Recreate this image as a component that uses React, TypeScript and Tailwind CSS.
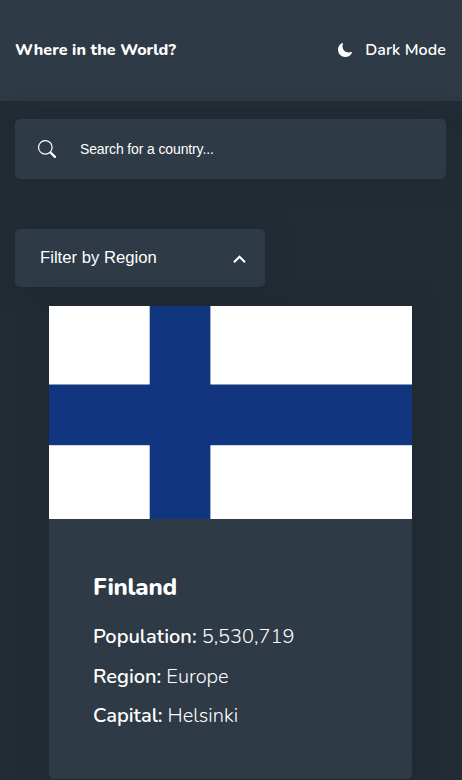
import { IoMoon } from "react-icons/io5";
import { BsSearch } from "react-icons/bs";
import { MdKeyboardArrowUp } from "react-icons/md";

const details = [
  { label: "Population", value: "5,530,719" },
  { label: "Region", value: "Europe" },
  { label: "Capital", value: "Helsinki" },
];

function Flag() {
  return (
    <svg viewBox="0 0 363 213" className="block h-[213px] w-full" role="img" aria-label="Flag of Finland">
      <rect width="363" height="213" fill="#fff" />
      <rect x="100.7" width="60.7" height="213" fill="#11357f" />
      <rect y="78.5" width="363" height="60.7" fill="#11357f" />
    </svg>
  );
}

export default function App() {
  return (
    <div className="h-[780px] w-full overflow-hidden bg-[#222c35] font-['Nunito','Open_Sans',sans-serif] text-white">
      <header className="flex h-[101px] items-center justify-between bg-[#2e3a45] pr-4 pb-0.5 pl-[15px] shadow-[0_0_20px_rgba(43,50,50,0.6)]">
        <h1 className="text-base font-extrabold tracking-[0.06px]">Where in the World?</h1>
        <button className="flex items-center gap-3 text-base font-semibold tracking-[0.1px]">
          <IoMoon size={16} />
          Dark Mode
        </button>
      </header>
      <main className="pt-[18px] pr-4 pl-[15px]">
        <label className="flex h-[60px] items-center rounded-[5px] bg-[#2e3a45] pl-[23px] shadow-[0_0_25px_rgba(32,40,46,0.6)]">
          <BsSearch size={18} />
          <input
            className="ml-6 w-72 bg-transparent font-['Liberation_Sans',sans-serif] text-[14px] tracking-[-0.13px] outline-none placeholder:text-white"
            placeholder="Search for a country..."
          />
        </label>
        <button className="mt-[50px] flex h-[58px] w-[250px] items-center justify-between rounded-[5px] bg-[#2e3a45] pr-[13px] pl-[25px] font-['Liberation_Sans',sans-serif] text-[16.7px] shadow-[0_0_25px_rgba(32,40,46,0.6)]">
          <span className="pb-px">Filter by Region</span>
          <MdKeyboardArrowUp size={25} className="mt-0.5" />
        </button>
        <article className="mt-[19px] ml-[34px] h-[473px] w-[363px] overflow-hidden rounded-b-[5px] bg-[#2e3a45] shadow-[0_0_25px_rgba(32,40,46,0.6)]">
          <Flag />
          <div className="px-11 pt-[50px]">
            <h2 className="text-2xl leading-9 font-extrabold tracking-[-0.25px]">Finland</h2>
            <dl className="mt-[17px] flex flex-col gap-[9.5px] text-xl leading-[30px]">
              {details.map(({ label, value }) => (
                <div key={label} className="flex gap-[5px]">
                  <dt className="font-semibold">{label}:</dt>
                  <dd className="font-light">{value}</dd>
                </div>
              ))}
            </dl>
          </div>
        </article>
      </main>
    </div>
  );
}
